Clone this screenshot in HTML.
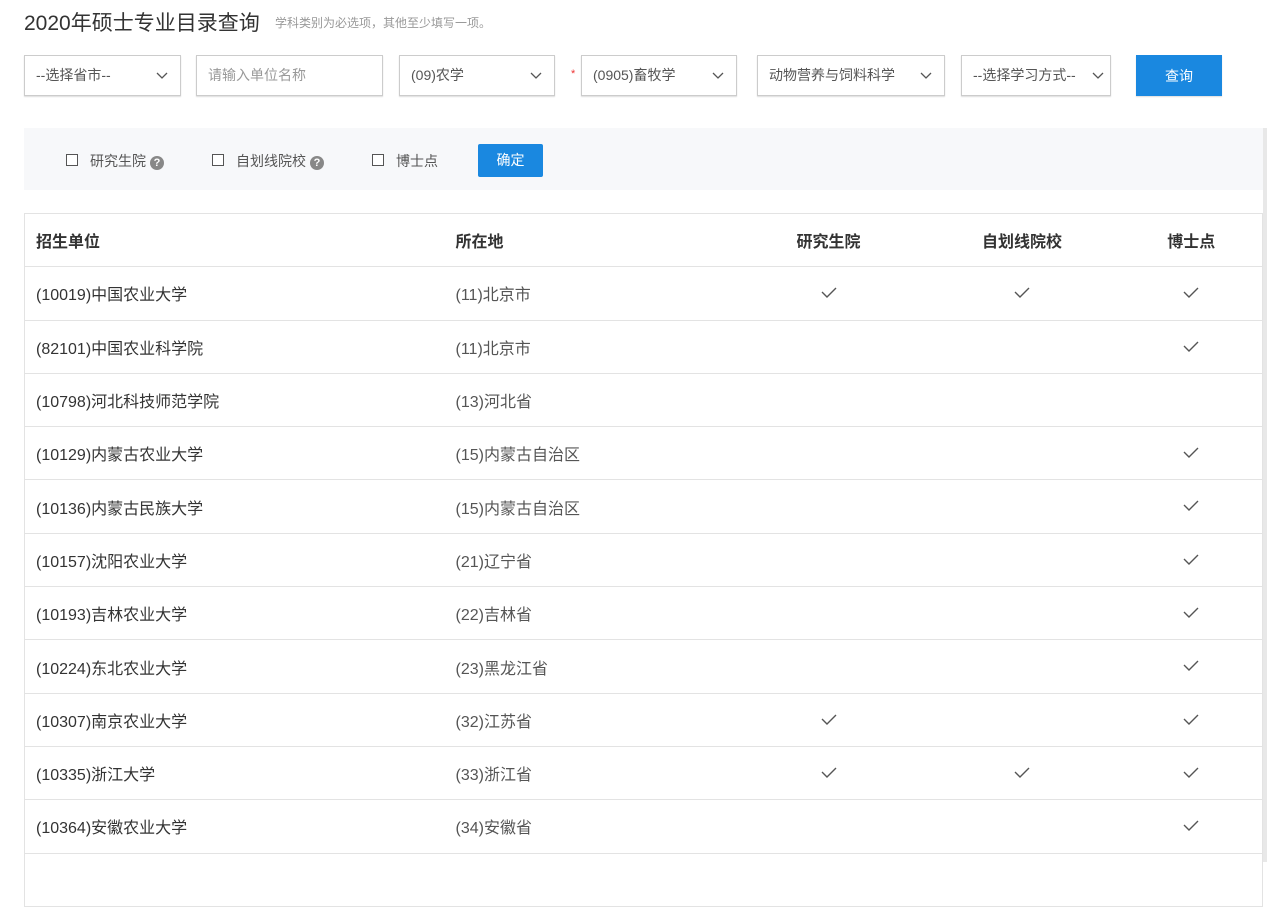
<!DOCTYPE html>
<html><head><meta charset="utf-8"><style>
*{margin:0;padding:0;box-sizing:border-box}
body{width:1267px;height:862px;overflow:hidden;background:#fff;font-family:"Liberation Sans","Noto Sans CJK SC",sans-serif;color:#333;position:relative}
.a{position:absolute}
.title{left:24px;top:7px;font-size:21px;color:#333}
.sub{left:275px;top:14px;font-size:12px;color:#999}
.box{position:absolute;top:55px;height:41px;border:1px solid #ccc;box-shadow:0 1px 1px #ddd;font-size:14px;color:#555;padding:0 0 0 11px;line-height:38px;background:#fff}
.box svg{position:absolute;right:12px;top:16px}
.btn{background:#1a88e0;color:#fff;text-align:center}
.bar{left:24px;top:128px;width:1240px;height:62px;background:#f7f8fa}
.cb{position:absolute;top:154px;width:12px;height:12px;border:1px solid #555;background:#fff}
.lbl{position:absolute;top:151px;font-size:14px;color:#555}
.q{display:inline-block;width:14px;height:14px;border-radius:50%;background:#888;color:#fff;font-size:11px;text-align:center;line-height:14px;font-weight:bold;vertical-align:0px;margin-left:4px}
table{position:absolute;left:24px;top:213px;width:1239px;border-collapse:collapse;font-size:16px;table-layout:fixed;border:1px solid #e3e3e3}
td,th{border-top:1px solid #e3e3e3;height:53.3px;padding:0}
th{font-weight:bold;text-align:left;color:#333}
td{color:#333}
.c1{padding-left:11px;width:431px}
.c2{width:278px}
.c3{width:190px}.c4{width:197px}
.c3,.c4,.c5{text-align:center}
td.c2{color:#555}
.k{display:inline-block;width:16px;height:12px;vertical-align:middle}
</style></head><body>
<svg width="0" height="0" style="position:absolute"><symbol id="ck" viewBox="0 0 16 12"><path d="M1 5l5 5 9-9" fill="none" stroke="#555" stroke-width="1.4"/></symbol></svg>
<div class="a title">2020年硕士专业目录查询</div>
<div class="a sub">学科类别为必选项，其他至少填写一项。</div>
<div class="box" style="left:24px;width:157px">--选择省市--<svg width="12" height="8" viewBox="0 0 12 8"><path d="M1 1l5 5 5-5" fill="none" stroke="#555" stroke-width="1.3"/></svg></div>
<div class="box" style="left:196px;width:187px;color:#999">请输入单位名称</div>
<div class="box" style="left:399px;width:156px">(09)农学<svg width="12" height="8" viewBox="0 0 12 8"><path d="M1 1l5 5 5-5" fill="none" stroke="#555" stroke-width="1.3"/></svg></div>
<div class="a" style="left:571px;top:68px;color:#e33;font-size:11px">*</div>
<div class="box" style="left:581px;width:156px">(0905)畜牧学<svg width="12" height="8" viewBox="0 0 12 8"><path d="M1 1l5 5 5-5" fill="none" stroke="#555" stroke-width="1.3"/></svg></div>
<div class="box" style="left:757px;width:188px">动物营养与饲料科学<svg width="12" height="8" viewBox="0 0 12 8"><path d="M1 1l5 5 5-5" fill="none" stroke="#555" stroke-width="1.3"/></svg></div>
<div class="box" style="left:961px;width:150px">--选择学习方式--<svg style="right:6px" width="12" height="8" viewBox="0 0 12 8"><path d="M1 1l5 5 5-5" fill="none" stroke="#555" stroke-width="1.3"/></svg></div>
<div class="box btn" style="left:1136px;width:86px;border-color:#1a88e0;padding:0;line-height:41px;top:55px">查询</div>
<div class="a bar"></div>
<div class="a" style="left:1263px;top:128px;width:4px;height:734px;background:#e8e8e8"></div>
<div class="cb" style="left:66px"></div><div class="lbl" style="left:90px">研究生院<span class="q">?</span></div>
<div class="cb" style="left:212px"></div><div class="lbl" style="left:236px">自划线院校<span class="q">?</span></div>
<div class="cb" style="left:372px"></div><div class="lbl" style="left:396px">博士点</div>
<div class="a btn" style="left:478px;top:144px;width:65px;height:33px;line-height:33px;font-size:14px;border-radius:2px">确定</div>
<table>
<tr><th class="c1">招生单位</th><th class="c2">所在地</th><th class="c3" style="text-align:center">研究生院</th><th class="c4" style="text-align:center">自划线院校</th><th class="c5" style="text-align:center">博士点</th></tr>
<tr><td class="c1">(10019)中国农业大学</td><td class="c2">(11)北京市</td><td class="c3"><svg class="k"><use href="#ck"/></svg></td><td class="c4"><svg class="k"><use href="#ck"/></svg></td><td class="c5"><svg class="k"><use href="#ck"/></svg></td></tr>
<tr><td class="c1">(82101)中国农业科学院</td><td class="c2">(11)北京市</td><td></td><td></td><td class="c5"><svg class="k"><use href="#ck"/></svg></td></tr>
<tr><td class="c1">(10798)河北科技师范学院</td><td class="c2">(13)河北省</td><td></td><td></td><td></td></tr>
<tr><td class="c1">(10129)内蒙古农业大学</td><td class="c2">(15)内蒙古自治区</td><td></td><td></td><td class="c5"><svg class="k"><use href="#ck"/></svg></td></tr>
<tr><td class="c1">(10136)内蒙古民族大学</td><td class="c2">(15)内蒙古自治区</td><td></td><td></td><td class="c5"><svg class="k"><use href="#ck"/></svg></td></tr>
<tr><td class="c1">(10157)沈阳农业大学</td><td class="c2">(21)辽宁省</td><td></td><td></td><td class="c5"><svg class="k"><use href="#ck"/></svg></td></tr>
<tr><td class="c1">(10193)吉林农业大学</td><td class="c2">(22)吉林省</td><td></td><td></td><td class="c5"><svg class="k"><use href="#ck"/></svg></td></tr>
<tr><td class="c1">(10224)东北农业大学</td><td class="c2">(23)黑龙江省</td><td></td><td></td><td class="c5"><svg class="k"><use href="#ck"/></svg></td></tr>
<tr><td class="c1">(10307)南京农业大学</td><td class="c2">(32)江苏省</td><td class="c3"><svg class="k"><use href="#ck"/></svg></td><td></td><td class="c5"><svg class="k"><use href="#ck"/></svg></td></tr>
<tr><td class="c1">(10335)浙江大学</td><td class="c2">(33)浙江省</td><td class="c3"><svg class="k"><use href="#ck"/></svg></td><td class="c4"><svg class="k"><use href="#ck"/></svg></td><td class="c5"><svg class="k"><use href="#ck"/></svg></td></tr>
<tr><td class="c1">(10364)安徽农业大学</td><td class="c2">(34)安徽省</td><td></td><td></td><td class="c5"><svg class="k"><use href="#ck"/></svg></td></tr>
<tr><td class="c1">&nbsp;</td><td></td><td></td><td></td><td></td></tr>
</table>
</body></html>
